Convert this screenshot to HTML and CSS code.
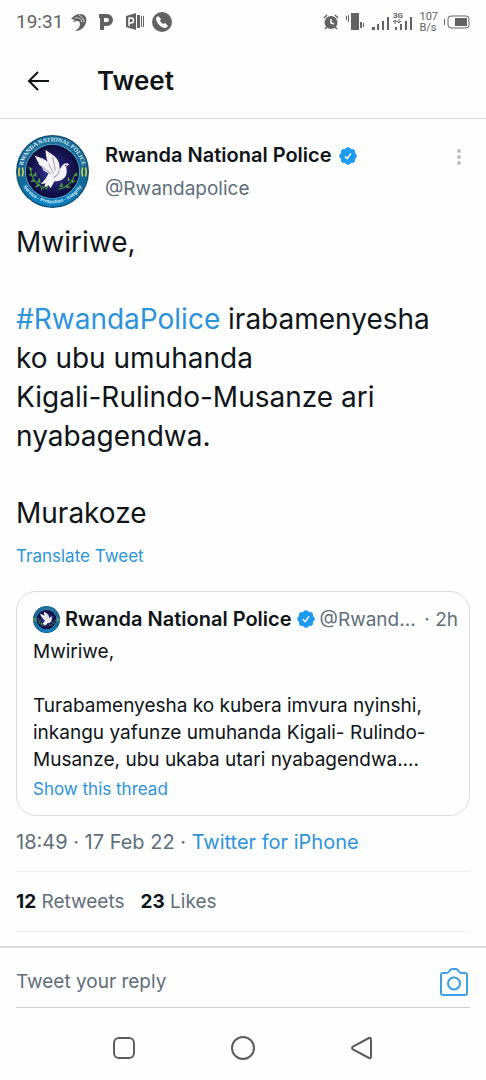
FILE: index.html
```html
<!DOCTYPE html>
<html lang="rw">
<head>
    <meta charset="UTF-8">
    <meta name="viewport" content="width=device-width, initial-scale=1.0">
    <title>Tweet</title>
    <link rel="stylesheet" href="styles.css">
</head>
<body>
    <!-- Shared shapes -->
    <svg class="sprite" aria-hidden="true">
        <defs>
            <radialGradient id="night">
                <stop offset="0" stop-color="#3a3f9c"/>
                <stop offset="0.6" stop-color="#1b1a60"/>
                <stop offset="1" stop-color="#0b0b38"/>
            </radialGradient>
            <linearGradient id="ring" x1="0" y1="0" x2="0" y2="1">
                <stop offset="0" stop-color="#2377a3"/>
                <stop offset="0.5" stop-color="#155f8c"/>
                <stop offset="1" stop-color="#0a83c4"/>
            </linearGradient>
        </defs>
        <symbol id="crest" viewBox="0 0 74 74">
            <circle cx="37" cy="37" r="37" fill="#0d5078"/>
            <circle cx="37" cy="37" r="35.500" fill="url(#ring)"/>
            <circle cx="37" cy="37" r="28" fill="#4fa3cc"/>
            <circle cx="37" cy="37" r="27" fill="url(#night)"/>
            <path d="M3.500 33c-1 3-1 6 0 9M6.500 33c1 3 1 6 0 9M70.500 33c1 3 1 6 0 9M67.500 33c-1 3-1 6 0 9" fill="none" stroke="#d5d94a" stroke-width="1.500"/>
            <g fill="none" stroke="#3f8a3c" stroke-width="1.300">
                <path d="M15 36c1 9 7 16 17 19"/>
                <path d="M60 39c-2 8-8 14-17 16"/>
            </g>
            <g fill="#4f9a45">
                <path d="M15 37l-3-5 5 2zM17 42l-5-2 4-1zM17 42l3-5 1 5zM20 47l-6 1 4-4zM21 48l3-5 1 6zM25 51l-6 3 3-5zM28 53l-3 4 1-5zM28 52l3-4 2 6z"/>
                <path d="M59 41l3-4 0 5zM56 46l5 0-4 3zM55 46l-2-4-1 5zM51 51l5 2-5 1zM48 52l-2-4-2 5z"/>
            </g>
            <path d="M54 30c-2-2-5-2-7 1l-3 4c1-6-2-12-7-15-3-2-5-3-7-5 0 5 1 9 2 12-3-3-8-4-13-6 2 3 2 5 4 7-1 1 1 3 3 4l2 4 5 3c-2 4-4 7-8 11l5-1-1 4 4-2 2 3 4-7c6 0 10-2 12-7 1-3 0-6 0-8l3-2z" fill="#f3f2f5"/>
            <path d="M33 29l5 10M26 32l9 7M37 22l3 14M38 43c3-1 5-3 6-7" fill="none" stroke="#b3aebf" stroke-width="1.200"/>
            <circle cx="50.500" cy="31" r="0.800" fill="#1b1a60"/>
        </symbol>
        <symbol id="verified" viewBox="0 0 24 24">
            <g fill="#1d9bf0">
                <circle cx="12" cy="12" r="9"/>
                <circle cx="12" cy="4.400" r="4"/>
                <circle cx="17.400" cy="6.600" r="4"/>
                <circle cx="19.600" cy="12" r="4"/>
                <circle cx="17.400" cy="17.400" r="4"/>
                <circle cx="12" cy="19.600" r="4"/>
                <circle cx="6.600" cy="17.400" r="4"/>
                <circle cx="4.400" cy="12" r="4"/>
                <circle cx="6.600" cy="6.600" r="4"/>
            </g>
            <path d="M8 12.500l3 3 5-7" fill="none" stroke="#fff" stroke-width="2"/>
        </symbol>
    </svg>

    <div class="screen">
        <!-- Status bar -->
        <div class="status-bar">
            <div class="status-left">
                <span class="clock">19:31</span>
                <svg class="bird-icon" viewBox="0 0 16 18" aria-hidden="true">
                    <path d="M0 6C4 1 9 0 13 2c3 2 3 7 1 10-2 4-6 6-10 6 3-2 5-4 5-7 0-2-1-3-3-3L1 9l3-2z" fill="#626262"/>
                    <path d="M4 5c4-1 6 1 7 4M8 2c3 2 5 4 5 7" fill="none" stroke="#fff" stroke-width="0.800"/>
                </svg>
                <svg class="p-icon" viewBox="0 0 14 16" aria-hidden="true">
                    <path d="M3 16V2H0M3 2h5a4 4 0 0 1 0 8H3" fill="none" stroke="#626262" stroke-width="4"/>
                </svg>
                <svg class="ppt-icon" viewBox="0 0 18 17" aria-hidden="true">
                    <path d="M0 3l10-3v17L0 14z" fill="#626262"/>
                    <path d="M11 2h3v13h-3zM15 3h1v11h-1zM17 3h1v11h-1z" fill="#626262"/>
                    <path d="M3 13V5h2a2 2 0 0 1 0 5H3" fill="none" stroke="#fff" stroke-width="1.500"/>
                </svg>
                <svg class="call-icon" viewBox="0 0 20 20" aria-hidden="true">
                    <circle cx="10" cy="10" r="10" fill="#626262"/>
                    <path d="M6 4L4 6c0 5 5 10 10 10l2-2-3-3-2 1c-1-1-2-2-3-3l1-2z" fill="#fff"/>
                </svg>
            </div>
            <div class="status-right">
                <svg class="alarm-icon" viewBox="0 0 16 16" aria-hidden="true">
                    <circle cx="8" cy="8.500" r="6.500" fill="#626262"/>
                    <path d="M1 4l3-3M15 4l-3-3M4 13l-2 2M12 13l2 2" stroke="#626262" stroke-width="1.500"/>
                    <path d="M8 5v4l3 1" fill="none" stroke="#fff" stroke-width="1.500"/>
                </svg>
                <svg class="vibrate-icon" viewBox="0 0 20 17" aria-hidden="true">
                    <path d="M6 0h8v17H6zM3 2h1v7H3zM1 3h1v4H1zM15 9h2v6h-2zM18 10h1v4h-1z" fill="#626262"/>
                </svg>
                <svg class="signal-icon" viewBox="0 0 42 18" aria-hidden="true">
                    <path d="M1 14h3v3H1zM6 11h2v6H6zM11 8h2v9h-2zM16 4h2v13h-2zM24 14h2v3h-2zM29 11h2v6h-2zM34 8h2v9h-2zM39 4h2v13h-2z" fill="#626262"/>
                    <path d="M24 11V7M22 9l2-2 2 2M28 6v4M26 8l2 2 2-2" fill="none" stroke="#626262"/>
                    <text class="signal-label" x="22" y="5">3G</text>
                </svg>
                <span class="net-speed">107<br>B/s</span>
                <svg class="battery-icon" viewBox="0 0 26 14" aria-hidden="true">
                    <rect x="4" y="1" width="21" height="12" rx="3" fill="none" stroke="#626262"/>
                    <path d="M11 3h12v8H11zM0 4h1v6H0z" fill="#626262"/>
                </svg>
            </div>
        </div>

        <header class="top-bar">
            <button class="icon-btn" aria-label="Back">
                <svg class="back-icon" viewBox="0 0 22 20"><path d="M11 1L2 10l9 9M2 10h20" fill="none" stroke="#0f1419" stroke-width="2"/></svg>
            </button>
            <h1 class="title">Tweet</h1>
        </header>

        <main class="tweet">
            <div class="author">
                <svg class="avatar" viewBox="0 0 74 74" role="img" aria-label="Rwanda National Police">
                    <use href="#crest"/>
                    <path id="arc-top" d="M6.500 37A30.500 30.500 0 0 1 67.500 37" fill="none"/>
                    <path id="arc-bottom" d="M3.500 41A34 34 0 0 0 70.500 41" fill="none"/>
                    <text class="crest-top" text-anchor="middle"><textPath href="#arc-top" startOffset="50%">RWANDA NATIONAL POLICE</textPath></text>
                    <text class="crest-bottom" text-anchor="middle"><textPath href="#arc-bottom" startOffset="50%">Service - Protection - Integrity</textPath></text>
                </svg>
                <div class="author-names">
                    <div class="name-line">
                        <span class="name">Rwanda National Police</span>
                        <svg class="verified" aria-label="Verified"><use href="#verified"/></svg>
                    </div>
                    <span class="handle">@Rwandapolice</span>
                </div>
                <button class="icon-btn more-btn" aria-label="More">
                    <svg class="more-icon" viewBox="0 0 4 16"><g fill="#b9c0c5"><circle cx="2" cy="2" r="2"/><circle cx="2" cy="8" r="2"/><circle cx="2" cy="14" r="2"/></g></svg>
                </button>
            </div>

            <div class="tweet-text">
                <p>Mwiriwe,</p>
                <p><a href="#">#RwandaPolice</a> irabamenyesha<br>ko ubu umuhanda<br>Kigali-Rulindo-Musanze ari nyabagendwa.</p>
                <p>Murakoze</p>
            </div>
            <a class="translate" href="#">Translate Tweet</a>

            <!-- Quoted tweet -->
            <article class="quote">
                <div class="quote-head">
                    <svg class="quote-avatar" aria-hidden="true"><use href="#crest"/></svg>
                    <span class="name">Rwanda National Police</span>
                    <svg class="verified" aria-label="Verified"><use href="#verified"/></svg>
                    <span class="quote-handle">@Rwand...</span>
                    <span class="quote-time">· 2h</span>
                </div>
                <div class="quote-text">
                    <p>Mwiriwe,</p>
                    <p>Turabamenyesha ko kubera imvura nyinshi,<br>inkangu yafunze umuhanda Kigali- Rulindo-<br>Musanze, ubu ukaba utari nyabagendwa.…</p>
                </div>
                <a class="thread-link" href="#">Show this thread</a>
            </article>

            <div class="meta">18:49 · 17 Feb 22 · <a href="#">Twitter for iPhone</a></div>
            <div class="stats">
                <span><b>12</b> Retweets</span>
                <span><b>23</b> Likes</span>
            </div>
        </main>

        <form class="reply">
            <div class="reply-box">
                <input class="reply-input" type="text" placeholder="Tweet your reply" aria-label="Tweet your reply">
                <button class="icon-btn" type="button" aria-label="Add photo">
                    <svg class="camera-icon" viewBox="0 0 28 28"><g fill="none" stroke="#3c9fe6" stroke-width="2"><path d="M3 5h4c2 0 3-4 5-4h4c2 0 3 4 5 4h4a2 2 0 0 1 2 2v18a2 2 0 0 1-2 2H3a2 2 0 0 1-2-2V7a2 2 0 0 1 2-2z"/><circle cx="14" cy="15.500" r="6"/></g></svg>
                </button>
            </div>
        </form>

        <nav class="nav-bar">
            <button class="icon-btn" aria-label="Recent apps">
                <svg class="nav-icon" viewBox="0 0 24 24"><rect x="2" y="2" width="20" height="20" rx="5" fill="none" stroke="#5c5c5c" stroke-width="2"/></svg>
            </button>
            <button class="icon-btn" aria-label="Home">
                <svg class="nav-icon" viewBox="0 0 24 24"><circle cx="12" cy="12" r="11" fill="none" stroke="#5c5c5c" stroke-width="2"/></svg>
            </button>
            <button class="icon-btn" aria-label="Back">
                <svg class="nav-icon" viewBox="0 0 24 24"><path d="M19 2L3 10.500q-2 1.500 0 3L19 22q2 1 2-2V4q0-3-2-2z" fill="none" stroke="#5c5c5c" stroke-width="2"/></svg>
            </button>
        </nav>
    </div>
</body>
</html>
```
FILE: styles.css
```css
/* General */
* {
    box-sizing: border-box;
}

body {
    margin: 0;
    background: #fefefe;
    color: #0f1419;
    font-family: Inter, "Liberation Sans", sans-serif;
    font-size: 19px;
}

p,
h1 {
    margin: 0;
}

a {
    color: #2b93dc;
    text-decoration: none;
}

svg {
    display: block;
    flex-shrink: 0;
}

.sprite {
    position: absolute;
    width: 0;
    height: 0;
}

.screen {
    display: flex;
    flex-direction: column;
    min-height: 100vh;
}

.icon-btn {
    display: flex;
    padding: 0;
    border: 0;
    background: none;
    cursor: pointer;
}

/* Status bar */
.status-bar {
    display: flex;
    justify-content: space-between;
    align-items: center;
    height: 43px;
    padding: 0 16px;
    color: #626262;
    font-family: Roboto, sans-serif;
}

.status-left,
.status-right {
    display: flex;
    align-items: center;
}

.status-left {
    gap: 8px;
}

.status-right {
    gap: 6px;
}

.clock {
    font-size: 19px;
}

.bird-icon {
    width: 16px;
    height: 18px;
}

.p-icon {
    width: 14px;
    height: 16px;
    margin: 0 4px;
}

.ppt-icon {
    width: 18px;
    height: 17px;
    margin-left: 1px;
}

.call-icon {
    width: 20px;
    height: 20px;
}

.alarm-icon {
    width: 16px;
    height: 16px;
}

.vibrate-icon {
    width: 20px;
    height: 17px;
}

.signal-icon {
    width: 42px;
    height: 18px;
    overflow: visible;
}

.signal-label {
    fill: #626262;
    font: 700 8px Roboto, sans-serif;
}

.net-speed {
    font-size: 11px;
    line-height: 11px;
}

.battery-icon {
    width: 26px;
    height: 14px;
}

/* Header */
.top-bar {
    display: flex;
    align-items: center;
    gap: 48px;
    height: 76px;
    padding: 0 27px;
    border-bottom: 1px solid #d6d9db;
}

.back-icon {
    width: 22px;
    height: 20px;
}

.title {
    font-size: 26px;
    font-weight: 600;
}

/* Tweet */
.tweet {
    flex: 1;
    padding: 16px 16px 0;
}

.author {
    display: flex;
    gap: 16px;
}

.avatar {
    width: 73px;
    height: 73px;
}

.crest-top {
    fill: #d9eef8;
    font: 700 6px "Liberation Serif", serif;
}

.crest-bottom {
    fill: #d9eef8;
    font: 700 5px "Liberation Sans", sans-serif;
}

.author-names {
    flex: 1;
    padding-top: 4px;
    line-height: 33px;
}

.name-line {
    display: flex;
    align-items: center;
    gap: 7px;
}

.name {
    font-size: 20px;
    font-weight: 600;
    white-space: nowrap;
}

.verified {
    width: 18px;
    height: 18px;
}

.handle {
    display: block;
    color: #5f6e7a;
}

.more-btn {
    align-self: flex-start;
    padding: 14px 9px;
}

.more-icon {
    width: 4px;
    height: 16px;
}

.tweet-text {
    display: flex;
    flex-direction: column;
    gap: 38px;
    padding-top: 15px;
    font-size: 28px;
    line-height: 39px;
}

.translate {
    display: block;
    padding-top: 10px;
    font-size: 17px;
    line-height: 26px;
}

/* Quoted tweet */
.quote {
    margin-top: 22px;
    padding: 12px 11px 12px 16px;
    border: 1px solid #d9dddf;
    border-radius: 20px;
}

.quote-head {
    display: flex;
    align-items: center;
    gap: 5px;
    height: 30px;
}

.quote-avatar {
    width: 27px;
    height: 27px;
}

.quote-handle,
.quote-time {
    color: #5f6e7a;
    white-space: nowrap;
}

.quote-time {
    margin-left: auto;
}

.quote-text {
    display: flex;
    flex-direction: column;
    gap: 27px;
    padding-top: 4px;
    line-height: 27px;
    white-space: nowrap;
}

.thread-link {
    display: block;
    padding-top: 2px;
    font-size: 17px;
    line-height: 28px;
}

/* Date and counters */
.meta {
    padding: 12px 0 14px;
    color: #5f6e7a;
    font-size: 20px;
    line-height: 29px;
}

.stats {
    display: flex;
    gap: 16px;
    padding: 15px 0;
    border-top: 1px solid #eceff0;
    border-bottom: 1px solid #eceff0;
    color: #5f6e7a;
    line-height: 29px;
}

.stats b {
    color: #0f1419;
}

/* Reply */
.reply {
    padding: 0 16px;
    border-top: 2px solid #dcdcdc;
}

.reply-box {
    display: flex;
    align-items: center;
    height: 60px;
    padding: 8px 2px 0 0;
    border-bottom: 1px solid #c9ced1;
}

.reply-input {
    flex: 1;
    min-width: 0;
    padding: 0;
    border: 0;
    outline: none;
    background: none;
    font: inherit;
}

.reply-input::placeholder {
    color: #5f6e7a;
}

.camera-icon {
    width: 28px;
    height: 28px;
}

/* Android navigation */
.nav-bar {
    display: flex;
    justify-content: center;
    align-items: center;
    gap: 95px;
    height: 72px;
    padding-top: 8px;
}

.nav-icon {
    width: 24px;
    height: 24px;
}
```
